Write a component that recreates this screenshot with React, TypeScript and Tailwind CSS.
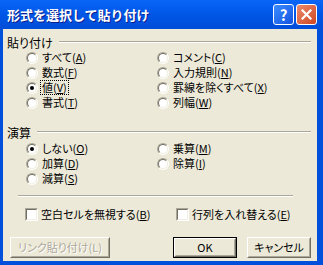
import type { ReactNode } from 'react';

const font = "font-['Noto_Sans_CJK_JP',sans-serif] [font-feature-settings:'palt']";

function Radio({ checked, children, focus }: { checked?: boolean; children: ReactNode; focus?: boolean }) {
  return (
    <div className="flex h-[15px] items-center">
      <span className="flex h-[12px] w-[12px] shrink-0 items-center justify-center rounded-full border border-t-[#ACA899] border-l-[#ACA899] border-r-white border-b-white">
        <span className="flex h-[10px] w-[10px] items-center justify-center rounded-full border border-t-[#716F64] border-l-[#716F64] border-r-[#F1EFE2] border-b-[#F1EFE2] bg-white">
          {checked && <span className="h-[4px] w-[4px] rounded-full bg-black" />}
        </span>
      </span>
      <span
        className={`ml-[3px] whitespace-nowrap px-[1px] leading-[13px] ${focus ? 'outline outline-1 outline-dotted outline-black' : ''}`}
      >
        {children}
      </span>
    </div>
  );
}

function Check({ children }: { children: ReactNode }) {
  return (
    <div className="flex h-[15px] items-center">
      <span className="h-[13px] w-[13px] shrink-0 border border-t-[#ACA899] border-l-[#ACA899] border-r-white border-b-white">
        <span className="block h-full w-full border border-t-[#716F64] border-l-[#716F64] border-r-[#F1EFE2] border-b-[#F1EFE2] bg-white" />
      </span>
      <span className="ml-[3px] whitespace-nowrap leading-[13px]">{children}</span>
    </div>
  );
}

function GroupHeader({ label }: { label: string }) {
  return (
    <div className="flex h-[14px] items-center">
      <span className="whitespace-nowrap text-[12px] leading-[13px]">{label}</span>
      <div className="ml-[6px] flex-1 border-t border-b border-t-[#ACA899] border-b-white" />
    </div>
  );
}

function Btn({ children, def, disabled, w }: { children: ReactNode; def?: boolean; disabled?: boolean; w: string }) {
  return (
    <div className={`${w} h-[21px] ${def ? 'border border-black' : ''}`}>
      <div className="h-full w-full border border-t-white border-l-white border-r-[#716F64] border-b-[#716F64]">
        <div
          className={`flex h-full w-full items-center justify-center whitespace-nowrap border border-t-[#ECE9D8] border-l-[#ECE9D8] border-r-[#ACA899] border-b-[#ACA899] leading-none ${
            disabled ? 'text-[#ACA899] [text-shadow:1px_1px_0_#ffffff]' : 'text-black'
          }`}
        >
          {children}
        </div>
      </div>
    </div>
  );
}

const U = ({ c }: { c: string }) => <span className="underline underline-offset-1">{c}</span>;

export default function App() {
  return (
    <div className={`flex h-[265px] w-[323px] flex-col bg-[#0050DC] ${font} text-[11px] text-black`}>
      <div className="flex h-[29px] items-center bg-gradient-to-b from-[#0A66F8] via-[#0056E6] to-[#004DD8] pl-[7px] pr-[6px]">
        <span className="flex-1 text-[13px] font-bold leading-none text-white [font-feature-settings:normal] [text-shadow:1px_1px_0_#0A1E8C]">
          形式を選択して貼り付け
        </span>
        <div className="flex h-[21px] w-[21px] items-center justify-center rounded-[3px] border border-white bg-gradient-to-br from-[#3C8CFF] to-[#1552E0] text-[15px] font-bold leading-none text-white">
          ?
        </div>
        <div className="ml-[2px] flex h-[21px] w-[21px] items-center justify-center rounded-[3px] border border-white bg-gradient-to-br from-[#E98A6B] to-[#D0441E]">
          <svg width="11" height="11" viewBox="0 0 11 11">
            <path d="M1.5 1.5 L9.5 9.5 M9.5 1.5 L1.5 9.5" stroke="white" strokeWidth="2.2" strokeLinecap="square" />
          </svg>
        </div>
      </div>
      <div className="mb-[4px] ml-[3px] mr-[6px] flex flex-1 flex-col bg-[#ECE9D8] pl-[4px] pr-[6px] pt-[6px]">
        <GroupHeader label="貼り付け" />
        <div className="ml-[19px] mt-[1px] grid grid-cols-[131px_1fr]">
          <div>
            <Radio>すべて(<U c="A" />)</Radio>
            <Radio>数式(<U c="F" />)</Radio>
            <Radio checked focus>値(<U c="V" />)</Radio>
            <Radio>書式(<U c="T" />)</Radio>
          </div>
          <div>
            <Radio>コメント(<U c="C" />)</Radio>
            <Radio>入力規則(<U c="N" />)</Radio>
            <Radio>罫線を除くすべて(<U c="X" />)</Radio>
            <Radio>列幅(<U c="W" />)</Radio>
          </div>
        </div>
        <div className="mt-[15px]">
          <GroupHeader label="演算" />
        </div>
        <div className="ml-[19px] mt-[2px] grid grid-cols-[131px_1fr]">
          <div>
            <Radio checked>しない(<U c="O" />)</Radio>
            <Radio>加算(<U c="D" />)</Radio>
            <Radio>減算(<U c="S" />)</Radio>
          </div>
          <div>
            <Radio>乗算(<U c="M" />)</Radio>
            <Radio>除算(<U c="I" />)</Radio>
          </div>
        </div>
        <div className="ml-[11px] mr-[18px] mt-[9px] border-t border-b border-t-[#ACA899] border-b-white" />
        <div className="ml-[18px] mt-[10px] grid grid-cols-[151px_1fr]">
          <Check>空白セルを無視する(<U c="B" />)</Check>
          <Check>行列を入れ替える(<U c="E" />)</Check>
        </div>
        <div className="ml-[3px] mt-[15px] flex">
          <Btn w="w-[100px]" disabled>
            リンク貼り付け(L)
          </Btn>
          <div className="flex-1" />
          <Btn w="w-[64px]" def>
            OK
          </Btn>
          <div className="w-[10px]" />
          <Btn w="w-[64px]">キャンセル</Btn>
        </div>
      </div>
    </div>
  );
}
